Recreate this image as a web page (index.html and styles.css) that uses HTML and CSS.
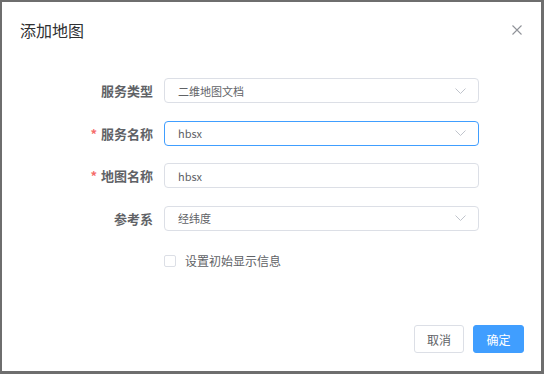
FILE: index.html
```html
<!DOCTYPE html>
<html lang="zh-CN">
<head>
    <meta charset="UTF-8">
    <title>添加地图</title>
    <link rel="stylesheet" href="styles.css">
</head>
<body>
    <div class="dialog">
        <div class="dialog-header">
            <span class="dialog-title">添加地图</span>
            <button class="dialog-close" aria-label="关闭">
                <svg width="10" height="10" viewBox="0 0 10 10">
                    <path d="M0.5 0.5 L9.5 9.5 M9.5 0.5 L0.5 9.5" stroke="#909399" stroke-width="1.1" fill="none"/>
                </svg>
            </button>
        </div>

        <form class="form">
            <div class="form-row">
                <label class="form-label">服务类型</label>
                <div class="input select">
                    <span>二维地图文档</span>
                    <svg class="arrow" width="11" height="6" viewBox="0 0 11 6">
                        <polyline points="0.5,0.5 5.5,5.5 10.5,0.5" stroke="#c0c4cc" stroke-width="1" fill="none"/>
                    </svg>
                </div>
            </div>

            <div class="form-row">
                <label class="form-label"><i class="required">*</i>服务名称</label>
                <div class="input select is-focus">
                    <span>hbsx</span>
                    <svg class="arrow" width="11" height="6" viewBox="0 0 11 6">
                        <polyline points="0.5,0.5 5.5,5.5 10.5,0.5" stroke="#c0c4cc" stroke-width="1" fill="none"/>
                    </svg>
                </div>
            </div>

            <div class="form-row">
                <label class="form-label"><i class="required">*</i>地图名称</label>
                <div class="input">
                    <span>hbsx</span>
                </div>
            </div>

            <div class="form-row">
                <label class="form-label">参考系</label>
                <div class="input select">
                    <span>经纬度</span>
                    <svg class="arrow" width="11" height="6" viewBox="0 0 11 6">
                        <polyline points="0.5,0.5 5.5,5.5 10.5,0.5" stroke="#c0c4cc" stroke-width="1" fill="none"/>
                    </svg>
                </div>
            </div>

            <div class="form-row">
                <span></span>
                <label class="checkbox">
                    <span class="checkbox-box"></span>
                    <span class="checkbox-text">设置初始显示信息</span>
                </label>
            </div>
        </form>

        <div class="dialog-footer">
            <button class="btn">取消</button>
            <button class="btn btn-primary">确定</button>
        </div>
    </div>
</body>
</html>
```

FILE: styles.css
```css
html, body {
    margin: 0;
    padding: 0;
}

body {
    width: 544px;
    height: 374px;
    background-color: #6e6e6e;
    font-family: "Noto Sans CJK SC", "Noto Sans", sans-serif;
    color: #606266;
    overflow: hidden;
}

.dialog {
    width: 539px;
    height: 369px;
    margin: 2px 3px 3px 2px;
    background-color: #ffffff;
    display: flex;
    flex-direction: column;
}

.dialog-header {
    display: flex;
    justify-content: space-between;
    align-items: center;
    padding: 16px 19px 0 18px;
    height: 24px;
}

.dialog-title {
    font-size: 16px;
    line-height: 24px;
    color: #303133;
}

.dialog-close {
    border: none;
    background: none;
    padding: 0;
    width: 10px;
    height: 10px;
    display: flex;
    cursor: pointer;
}

/* form */
.form {
    margin: 36px 0 0 0;
}

.form-row {
    display: grid;
    grid-template-columns: 151px 315px;
    column-gap: 11px;
    align-items: center;
    height: 25px;
    margin-bottom: 17.5px;
}

.form-label {
    text-align: right;
    font-size: 13px;
    font-weight: 700;
    color: #606266;
}

.required {
    font-style: normal;
    color: #f56c6c;
    margin-right: 4px;
}

.input {
    box-sizing: border-box;
    height: 25px;
    border: 1px solid #dcdfe6;
    border-radius: 4px;
    padding: 0 12px 0 13px;
    display: flex;
    align-items: center;
    justify-content: space-between;
    font-size: 11px;
    color: #606266;
}

.input.is-focus {
    border-color: #409eff;
}

.arrow {
    display: block;
}

.checkbox {
    display: flex;
    align-items: center;
    gap: 9px;
}

.checkbox-box {
    box-sizing: border-box;
    width: 12px;
    height: 12px;
    border: 1px solid #dcdfe6;
    border-radius: 2px;
}

.checkbox-text {
    font-size: 12px;
    color: #606266;
}

/* footer */
.dialog-footer {
    margin-top: auto;
    display: flex;
    justify-content: flex-end;
    gap: 9px;
    padding: 0 17px 18px 0;
}

.btn {
    height: 28px;
    width: 50px;
    border: 1px solid #dcdfe6;
    border-radius: 3px;
    background-color: #ffffff;
    color: #606266;
    font-family: inherit;
    font-size: 12px;
    padding: 0;
    cursor: pointer;
}

.btn-primary {
    width: 51px;
    background-color: #409eff;
    border-color: #409eff;
    color: #ffffff;
}
```
